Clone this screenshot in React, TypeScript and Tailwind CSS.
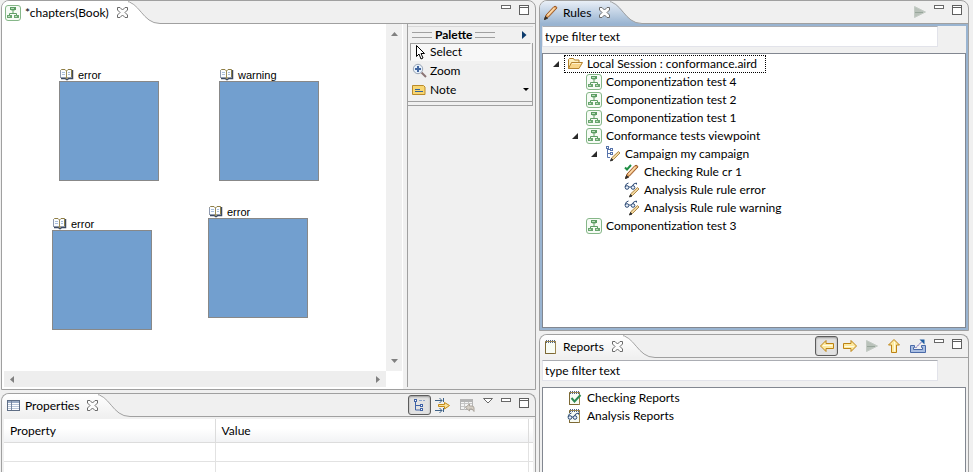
import React from "react";

type IconProps = { children: React.ReactNode; w?: number; h?: number };

function Glyph({ children, w = 16, h = 16 }: IconProps) {
  return (
    <svg width={w} height={h} viewBox={`0 0 ${w} ${h}`} fill="none" className="block shrink-0" aria-hidden="true">
      {children}
    </svg>
  );
}

const DiagramIcon = () => (
  <Glyph>
    <rect x="0.5" y="0.5" width="15" height="15" rx="2.5" fill="#f6fbf5" stroke="#86b789" />
    <rect x="5" y="2" width="6" height="3" fill="#5b9c63" />
    <path d="M8 5v4M4.500 11V8.500h7V11" stroke="#5f9e66" />
    <rect x="6.500" y="5" width="3" height="1" fill="#8dbb8f" />
    <rect x="2" y="10" width="5" height="3" fill="#69a56f" />
    <rect x="9" y="10" width="5" height="3" fill="#69a56f" />
    <path d="M3 11.500h2M10 11.500h2M6 3.500h3" stroke="#b9dcb9" />
  </Glyph>
);

const PencilShape = () => (
  <>
    <path d="M1.500 14.500l1.500-4.500 8-8.500q2.500-1 3 1.500l-8.500 9z" fill="#e0a15f" stroke="#9a5a2c" />
    <path d="M4.500 10.500l7-7.500" stroke="#fbdcae" strokeWidth="1.500" />
    <path d="M1.500 14.500l1-3 2 1.800z" fill="#33302c" stroke="#33302c" />
  </>
);

const RulesIcon = () => (
  <Glyph>
    <PencilShape />
  </Glyph>
);

const CheckRuleIcon = () => (
  <Glyph>
    <PencilShape />
    <path d="M1 3.500l2 2 4-4.500" stroke="#1f8f45" strokeWidth="2" />
  </Glyph>
);

const SmallPencil = () => (
  <>
    <path d="M6 14.500l1-3 6.500-6 1.500 1.500-6.500 6.500z" fill="#f1d69d" stroke="#b08a4a" />
    <path d="M5.500 15l1-2.500 1.500 1.500z" fill="#333" stroke="#333" />
  </>
);

const CampaignIcon = () => (
  <Glyph>
    <path d="M2.500 2v9.500H5M2.500 3.500H5M2.500 7.500H5" stroke="#5673ab" />
    <rect x="1.500" y="0.500" width="2" height="2" fill="#fff" stroke="#5673ab" />
    <rect x="5.500" y="2.500" width="2" height="2" fill="#fff" stroke="#5673ab" />
    <rect x="5.500" y="6.500" width="2" height="2" fill="#fff" stroke="#5673ab" />
    <SmallPencil />
  </Glyph>
);

const Glasses = () => (
  <g stroke="#2d4a75">
    <path d="M1 5q1-4 3.500-4M8 5q1-4 4.500-4v1.500" />
    <circle cx="3" cy="5.500" r="1.800" fill="#e8f0fa" />
    <circle cx="9" cy="5.500" r="1.800" fill="#e8f0fa" />
    <path d="M5 5h2" />
  </g>
);

const AnalysisRuleIcon = () => (
  <Glyph>
    <Glasses />
    <SmallPencil />
  </Glyph>
);

const FolderIcon = () => (
  <Glyph>
    <path d="M1.500 12.500V3.500l1-1h4l1 1.500h4.500v3" fill="#fdeebd" stroke="#b5832f" />
    <path d="M1.500 12.500l3-6h11l-3.500 6z" fill="#f8d488" stroke="#b5832f" />
    <path d="M5 7.500h9" stroke="#fff1cb" />
  </Glyph>
);

const Pad = () => (
  <>
    <rect x="2.500" y="2.500" width="10" height="12" fill="#f8fcf5" stroke="#9a8550" />
    <path d="M2.500 3v11.500h9" stroke="#7c6834" />
    <path d="M3 1.500h10M3 3.500h10" stroke="#4d6288" strokeDasharray="1 1" />
  </>
);

const ReportsIcon = () => (
  <Glyph>
    <Pad />
  </Glyph>
);

const CheckReportIcon = () => (
  <Glyph>
    <Pad />
    <path d="M4.500 8l3 3.500L13.500 5" stroke="#2c8b55" strokeWidth="2" />
  </Glyph>
);

const AnalysisReportIcon = () => (
  <Glyph>
    <Pad />
    <rect x="0" y="5" width="12" height="7" fill="#f8fcf5" />
    <g stroke="#2d4a75">
      <path d="M1 9q1-4 3.500-4M7 9q1-4 4.500-4v1.500" />
      <circle cx="3" cy="9.500" r="1.800" fill="#e8f0fa" />
      <circle cx="8" cy="9.500" r="1.800" fill="#e8f0fa" />
      <path d="M5 9h1" />
    </g>
  </Glyph>
);

const TableIcon = () => (
  <Glyph>
    <rect x="2.500" y="2.500" width="12" height="10" fill="#fff" stroke="#5f6e85" />
    <rect x="3" y="3" width="11" height="2" fill="#9aabc4" />
    <path d="M3 6.500h11M3 8.500h11M3 10.500h11" stroke="#b9c6d8" />
    <path d="M6.500 3v9" stroke="#7787a0" />
  </Glyph>
);

const BookIcon = () => (
  <Glyph w={15} h={13}>
    <path d="M2 10.500h4.500l1 1h1l1-1H13.500V2" stroke="#3c4a63" strokeWidth="1.500" />
    <path d="M1.500 9.500v-7l1-1h3.500l1.500 1.500L9 1.500h3.500v8H9l-1.500 1-1.500-1z" fill="#fafcff" stroke="#8f7e45" />
    <path d="M1.500 2.500v7h5M12.500 9.500H9" stroke="#8f9ab0" />
    <path d="M7.500 3v7" stroke="#9c8c58" />
    <path d="M3 4.500h3M3 6.500h3M9 4.500h2M9 6.500h2" stroke="#a8bedd" />
  </Glyph>
);

const CloseIcon = () => (
  <Glyph w={11} h={11}>
    <path
      d="M0.500 0.500h2.500l2.500 2.500 2.500-2.500h2.500v2.500l-2.500 2.500 2.500 2.500v2.500h-2.500l-2.500-2.500-2.500 2.500h-2.500v-2.500l2.500-2.500-2.500-2.500z"
      fill="#fdfdfd"
      stroke="#6b6b6b"
    />
  </Glyph>
);

const MinIcon = () => (
  <Glyph w={10} h={4}>
    <rect x="0.500" y="0.500" width="9" height="3" fill="#fff" stroke="#686868" />
  </Glyph>
);

const MaxIcon = () => (
  <Glyph w={10} h={10}>
    <rect x="0.500" y="0.500" width="9" height="9" fill="#fff" stroke="#5f5f5f" />
    <path d="M0 2.500h10" stroke="#5f5f5f" />
  </Glyph>
);

const MenuIcon = () => (
  <Glyph w={10} h={6}>
    <path d="M0.500 0.500h9L5 5z" fill="#fff" stroke="#686868" />
  </Glyph>
);

const PlayIcon = () => (
  <Glyph w={12} h={12}>
    <path d="M0.500 0.500v11L11.500 6z" fill="#b9c2ba" stroke="#c3cac4" />
    <path d="M1 6.500h8" stroke="#98a69b" />
  </Glyph>
);

const ArrowIcon = ({ turn }: { turn: string }) => (
  <Glyph>
    <g transform={turn}>
      <path d="M1.500 8l5.500-5.500v3h7.500v5H7v3z" fill="#fdeaa0" stroke="#bd8213" />
      <path d="M4 7.500h9.500" stroke="#fffbe6" />
    </g>
  </Glyph>
);

const ExportIcon = () => (
  <Glyph>
    <path d="M0.500 7.500h4v2h-1v2h9v-2h-1v-2h4v7H0.500z" fill="#a9bee2" stroke="#4a6aa8" />
    <path d="M5.500 10L12 3.500" stroke="#4b3fa8" strokeDasharray="2 1" />
    <path d="M9.500 1.500h5v5z" fill="#1d5ba0" />
  </Glyph>
);

const TreeModeIcon = () => (
  <Glyph>
    <path d="M3.500 4v9H9M3.500 8.500H9" stroke="#3f62a6" />
    <path d="M7 3.500h6" stroke="#8aa2cc" strokeDasharray="3 1" />
    <rect x="2.500" y="2.500" width="2" height="2" fill="#fff" stroke="#3f62a6" />
    <rect x="8.500" y="7.500" width="2" height="2" fill="#fff" stroke="#3f62a6" />
    <rect x="8.500" y="11.500" width="2" height="2" fill="#fff" stroke="#3f62a6" />
  </Glyph>
);

const FilterIcon = () => (
  <Glyph>
    <path d="M0 3.500h7M4.500 1l2.500 2.500L4.500 6M8.500 1v4M0 13.500h7M4.500 11l2.500 2.500L4.500 16M8.500 11v4" stroke="#3e6288" />
    <path d="M3.500 7.500h6v-2l5 3-5 3.500v-2.500h-6z" fill="#fbe39a" stroke="#c38a1a" />
  </Glyph>
);

const RestoreIcon = () => (
  <Glyph>
    <rect x="1.500" y="2.500" width="12" height="10" fill="#f3f3f3" stroke="#b4b4b4" />
    <path d="M1 4h13" stroke="#b4b4b4" strokeWidth="2" />
    <path d="M2 6.500h11M2 9.500h11M5.500 5v8M9.500 5v8" stroke="#c6c6c6" />
    <path d="M6.500 10.500l4-3.500v2h2.500q2 0 2 2v3.500l-2-2.500h-2.500v2z" fill="#d5cfc6" stroke="#aaa49c" />
  </Glyph>
);

const CursorIcon = () => (
  <Glyph w={12} h={16}>
    <path d="M1.500 1.500v11l2.500-2.500 2 5 2-1-2-4.500h3.500z" fill="#fff" stroke="#000" />
  </Glyph>
);

const ZoomIcon = () => (
  <Glyph>
    <path d="M9.500 9.500l4.500 4.500" stroke="#8a7474" strokeWidth="2" />
    <circle cx="6" cy="6" r="4.700" fill="#e6f0fb" stroke="#9aa5b4" />
    <path d="M6 3v6M3 6h6" stroke="#42669f" strokeWidth="2" />
  </Glyph>
);

const NoteIcon = () => (
  <Glyph w={14} h={12}>
    <path d="M0.500 1.500h11l1.500 1.500v7.500H0.500z" fill="#f8d672" stroke="#b98a2b" />
    <path d="M3 5.500h5M3 7.500h8" stroke="#34649c" />
  </Glyph>
);

const Tri = ({ d, w, h, color }: { d: string; w: number; h: number; color: string }) => (
  <Glyph w={w} h={h}>
    <path d={d} fill={color} />
  </Glyph>
);

function IconButton({ label, children, pressed }: { label: string; children: React.ReactNode; pressed?: boolean }) {
  return (
    <button
      type="button"
      aria-label={label}
      aria-pressed={pressed}
      className={
        pressed
          ? "flex h-5 w-[23px] items-center justify-center rounded-[3px] border border-[#5c5c5c] bg-[#e2e2e2] shadow-[inset_0_1px_2px_#9a9a9a]"
          : "flex h-5 items-center justify-center"
      }
    >
      {children}
    </button>
  );
}

function WindowButtons() {
  return (
    <div className="flex gap-2 self-start pt-1">
      <button type="button" aria-label="Minimize" className="self-start">
        <MinIcon />
      </button>
      <button type="button" aria-label="Maximize" className="self-start">
        <MaxIcon />
      </button>
    </div>
  );
}

type PanelProps = {
  title: string;
  icon: React.ReactNode;
  active?: boolean;
  open?: boolean;
  plain?: boolean;
  tools?: React.ReactNode;
  className: string;
  children: React.ReactNode;
};

function Panel({ title, icon, active, open, plain, tools, className, children }: PanelProps) {
  const tabFill = active
    ? "bg-linear-to-b from-[#e9eff7] to-[#99b4d1]"
    : plain
      ? "bg-white"
      : "bg-linear-to-b from-white to-[#f0f0f0]";
  const id = `tab-${title.replace(/\W/g, "")}`;
  return (
    <section
      aria-label={title}
      className={`flex min-h-0 flex-col overflow-hidden rounded-t-lg border border-[#a0a0a0] bg-[#f0f0f0] ${open ? "border-b-0" : ""} ${className}`}
    >
      <header className="flex h-[23px] shrink-0">
        <div className={`flex items-center gap-1 pl-[3px] ${tabFill}`}>
          {icon}
          <h2 className="whitespace-pre">{title}</h2>
          <button type="button" aria-label={`Close ${title}`} className="ml-1">
            <CloseIcon />
          </button>
        </div>
        <svg width="32" height="23" viewBox="0 0 32 23" className="block shrink-0" aria-hidden="true">
          <defs>
            <linearGradient id={id} x1="0" y1="0" x2="0" y2="1">
              <stop offset="0" stopColor={active ? "#e9eff7" : "#ffffff"} />
              <stop offset="1" stopColor={active ? "#99b4d1" : plain ? "#ffffff" : "#f0f0f0"} />
            </linearGradient>
          </defs>
          <path d="M0 0C12 2 16 22.500 32 22.500V23H0z" fill={`url(#${id})`} />
          <path d="M-4 0C12 0 14 22.500 32 22.500" fill="none" stroke="#a0a0a0" />
        </svg>
        <div className="flex flex-1 items-center justify-end gap-2 border-b border-[#a0a0a0] pr-1.5">
          {tools}
          <WindowButtons />
        </div>
      </header>
      {children}
    </section>
  );
}

type Node = { level: number; label: string; icon: React.ReactNode; expanded?: boolean; focused?: boolean };

const indents = ["pl-2", "pl-[27px]", "pl-[46px]", "pl-[65px]"];

function Tree({ label, nodes }: { label: string; nodes: Node[] }) {
  return (
    <ul role="tree" aria-label={label} className="pt-px">
      {nodes.map((n) => (
        <li
          key={n.label}
          role="treeitem"
          aria-level={n.level + 1}
          aria-expanded={n.expanded}
          className={`flex h-[18px] items-center ${indents[n.level]}`}
        >
          <span className="flex w-[13px] pl-px">
            {n.expanded && (
              <button type="button" aria-label={`Collapse ${n.label}`}>
                <Tri w={8} h={8} d="M7 1v6H1z" color="#2a2a2a" />
              </button>
            )}
          </span>
          <span
            className={`flex h-[18px] items-center gap-1 border border-dotted pr-2 pl-0.5 whitespace-pre ${n.focused ? "border-black" : "border-transparent"}`}
          >
            {n.icon}
            {n.label}
          </span>
        </li>
      ))}
    </ul>
  );
}

const ruleNodes: Node[] = [
  { level: 0, label: "Local Session : conformance.aird", icon: <FolderIcon />, expanded: true, focused: true },
  { level: 1, label: "Componentization test 4", icon: <DiagramIcon /> },
  { level: 1, label: "Componentization test 2", icon: <DiagramIcon /> },
  { level: 1, label: "Componentization test 1", icon: <DiagramIcon /> },
  { level: 1, label: "Conformance tests viewpoint", icon: <DiagramIcon />, expanded: true },
  { level: 2, label: "Campaign my campaign", icon: <CampaignIcon />, expanded: true },
  { level: 3, label: "Checking Rule cr 1", icon: <CheckRuleIcon /> },
  { level: 3, label: "Analysis Rule rule error", icon: <AnalysisRuleIcon /> },
  { level: 3, label: "Analysis Rule rule warning", icon: <AnalysisRuleIcon /> },
  { level: 1, label: "Componentization test 3", icon: <DiagramIcon /> },
];

const reportNodes: Node[] = [
  { level: 0, label: "Checking Reports", icon: <CheckReportIcon /> },
  { level: 0, label: "Analysis Reports", icon: <AnalysisReportIcon /> },
];

function Filter({ label }: { label: string }) {
  return (
    <input
      type="text"
      aria-label={label}
      defaultValue="type filter text"
      className="mr-7 block h-[21px] border border-[#e2e3ea] border-t-[#abadb3] bg-white px-0.5 outline-none"
    />
  );
}

const books = [
  { name: "error", place: "left-[57px] top-[44px]" },
  { name: "warning", place: "left-[217px] top-[44px]" },
  { name: "error", place: "left-[50px] top-[193px]" },
  { name: "error", place: "left-[206px] top-[181px]" },
];

function Canvas() {
  return (
    <div className="relative min-h-0 flex-1 overflow-hidden bg-white">
      {books.map((b) => (
        <figure key={b.place} className={`absolute w-[100px] ${b.place}`}>
          <figcaption className="flex h-[13px] items-center gap-1 font-['Liberation_Sans',Arial,sans-serif] text-[11px]">
            <BookIcon />
            {b.name}
          </figcaption>
          <div className="h-[100px] border border-[#888888] bg-[#729fcf]" />
        </figure>
      ))}
    </div>
  );
}

function Palette() {
  return (
    <aside aria-label="Palette" className="flex w-32 flex-col border-l border-[#a0a0a0] pt-0.5 pr-0.5">
      <div className="flex h-[17px] items-center justify-between border-t border-[#d8d8d8] pr-1.5 pl-1">
        <div className="flex items-center gap-[3px]">
          <span className="h-1.5 w-5 border-y border-[#a0a0a0]" />
          <h3 className="font-bold">Palette</h3>
          <span className="h-1.5 w-5 border-y border-[#a0a0a0]" />
        </div>
        <button type="button" aria-label="Hide palette">
          <Tri w={5} h={8} d="M0 0l4.500 4L0 8z" color="#0b3a6b" />
        </button>
      </div>
      <div className="flex flex-col border-r border-b border-[#a0a0a0] pr-px pb-0.5 pl-0.5">
        <button
          type="button"
          aria-pressed="true"
          className="flex h-[18px] items-center gap-[3px] border border-[#f8f8f8] border-t-[#a0a0a0] border-l-[#a0a0a0] bg-[#f7f7f7] pl-1"
        >
          <CursorIcon />
          Select
        </button>
        <button type="button" className="flex h-[19px] items-center gap-0.5 pl-0.5">
          <ZoomIcon />
          Zoom
        </button>
        <button type="button" className="flex h-[19px] items-center gap-1 pr-0.5 pl-0.5">
          <NoteIcon />
          Note
          <span className="ml-auto">
            <Tri w={6} h={3} d="M0 0h6L3 3z" color="#000" />
          </span>
        </button>
      </div>
      <div className="h-1 border-r border-b border-[#a0a0a0]" />
    </aside>
  );
}

export default function App() {
  return (
    <main className="grid h-screen grid-cols-[535fr_430fr] gap-[3px] overflow-hidden bg-[#f0f0f0] pr-1 pl-px font-['Lato','Segoe_UI',sans-serif] text-[12px] leading-4 text-black">
      <div className="flex min-h-0 min-w-0 flex-col gap-[3px]">
        <Panel title="*chapters(Book)" icon={<DiagramIcon />} plain className="flex-1">
          <div className="flex min-h-0 flex-1 bg-white">
            <div className="flex min-w-0 flex-1 flex-col pb-0.5">
              <div className="flex min-h-0 flex-1">
                <Canvas />
                <div className="flex w-4 flex-col items-center justify-between bg-[#f0f0f0] pt-2 pb-2">
                  <Tri w={7} h={4} d="M0 4h7L3.500 0z" color="#808080" />
                  <Tri w={7} h={4} d="M0 0h7L3.500 4z" color="#808080" />
                </div>
              </div>
              <div className="mr-4 ml-0.5 flex h-4 items-center justify-between bg-[#eeeeee] px-1.5">
                <Tri w={4} h={7} d="M4 0v7L0 3.500z" color="#808080" />
                <Tri w={4} h={7} d="M0 0v7l4-3.500z" color="#808080" />
              </div>
            </div>
            <div className="w-[5px] border-l border-white bg-[#f0f0f0]" />
            <div className="flex bg-[#f0f0f0] pb-0.5">
              <Palette />
            </div>
          </div>
        </Panel>

        <Panel
          title="Properties"
          icon={<TableIcon />}
          open
          className="h-[79px] shrink-0"
          tools={
            <>
              <div className="flex items-center gap-1">
                <IconButton label="Show categories" pressed>
                  <TreeModeIcon />
                </IconButton>
                <IconButton label="Show advanced properties">
                  <FilterIcon />
                </IconButton>
              </div>
              <IconButton label="Restore default value">
                <RestoreIcon />
              </IconButton>
              <button type="button" aria-label="View menu" className="self-start pt-1">
                <MenuIcon />
              </button>
            </>
          }
        >
          <div className="min-h-0 flex-1 overflow-hidden px-0.5 pt-0.5">
            <table className="w-full table-fixed border-separate border-spacing-0 bg-white text-left">
              <thead>
                <tr className="h-6 bg-linear-to-b from-white from-40% to-[#f1f2f4]">
                  <th scope="col" className="w-2/5 border-r border-b border-[#dcdcdc] px-1.5 font-normal">
                    Property
                  </th>
                  <th scope="col" className="border-r border-b border-[#dcdcdc] px-1.5 font-normal">
                    Value
                  </th>
                  <td className="w-1 border-b border-[#dcdcdc]" />
                </tr>
              </thead>
              <tbody>
                {[0, 1].map((r) => (
                  <tr key={r} className="h-[19px]">
                    <td className="border-r border-b border-[#e2e2e2]" />
                    <td className="border-r border-b border-[#e2e2e2]" />
                    <td className="border-b border-[#e2e2e2]" />
                  </tr>
                ))}
              </tbody>
            </table>
          </div>
        </Panel>
      </div>

      <div className="flex min-h-0 min-w-0 flex-col gap-[3px]">
        <Panel
          title="Rules"
          icon={<RulesIcon />}
          active
          className="flex-1"
          tools={
            <IconButton label="Run">
              <PlayIcon />
            </IconButton>
          }
        >
          <div className="flex min-h-0 flex-1 flex-col gap-1.5 border-2 border-[#99b4d1]">
            <Filter label="Filter rules" />
            <div className="min-h-0 flex-1 overflow-hidden border border-[#828790] bg-white">
              <Tree label="Rules" nodes={ruleNodes} />
            </div>
          </div>
        </Panel>

        <Panel
          title="Reports"
          icon={<ReportsIcon />}
          open
          className="h-[138px] shrink-0"
          tools={
            <>
              <div className="flex items-center gap-1">
                <IconButton label="Back" pressed>
                  <ArrowIcon turn="" />
                </IconButton>
                <IconButton label="Forward">
                  <ArrowIcon turn="rotate(180 8 8)" />
                </IconButton>
              </div>
              <IconButton label="Run">
                <PlayIcon />
              </IconButton>
              <IconButton label="Up">
                <ArrowIcon turn="rotate(90 8 8)" />
              </IconButton>
              <IconButton label="Export">
                <ExportIcon />
              </IconButton>
            </>
          }
        >
          <div className="flex min-h-0 flex-1 flex-col gap-1.5 px-0.5 pt-0.5">
            <Filter label="Filter reports" />
            <div className="min-h-0 flex-1 overflow-hidden border border-b-0 border-[#828790] bg-white">
              <Tree label="Reports" nodes={reportNodes} />
            </div>
          </div>
        </Panel>
      </div>
    </main>
  );
}
